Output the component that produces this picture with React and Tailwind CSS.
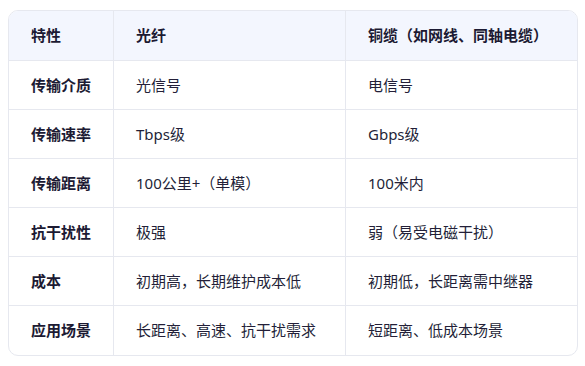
import React from 'react';

const header = ['特性', '光纤', '铜缆（如网线、同轴电缆）'];

const rows = [
  ['传输介质', '光信号', '电信号'],
  ['传输速率', 'Tbps级', 'Gbps级'],
  ['传输距离', '100公里+（单模）', '100米内'],
  ['抗干扰性', '极强', '弱（易受电磁干扰）'],
  ['成本', '初期高，长期维护成本低', '初期低，长距离需中继器'],
  ['应用场景', '长距离、高速、抗干扰需求', '短距离、低成本场景'],
];

const App = () => {
  return (
    <div
      className="w-[585px] h-[366px] bg-white pt-[10px] pl-[8px]"
      style={{ fontFamily: '"Noto Sans", "Noto Sans CJK SC", sans-serif' }}
    >
      <div className="w-[570px] rounded-[10px] border border-[#e6e8ef] overflow-hidden text-[15px]">
        <div className="grid grid-cols-[105px_232px_1fr] h-[50px] bg-[#f3f6fe] border-b border-[#e6e8ef] font-bold text-[#1c1a33]">
          {header.map((h, i) => (
            <div
              key={i}
              className={`flex items-center pl-[22px] ${i < 2 ? 'border-r border-[#e6e8ef]' : ''}`}
            >
              {h}
            </div>
          ))}
        </div>
        {rows.map((r, ri) => (
          <div
            key={ri}
            className={`grid grid-cols-[105px_232px_1fr] h-[49px] ${ri < rows.length - 1 ? 'border-b border-[#e6e8ef]' : ''}`}
          >
            <div className="flex items-center pl-[22px] font-bold text-[#1c1a33] border-r border-[#e6e8ef]">
              {r[0]}
            </div>
            <div className="flex items-center pl-[22px] text-[#231f38] border-r border-[#e6e8ef]">
              {r[1]}
            </div>
            <div className="flex items-center pl-[22px] text-[#231f38]">{r[2]}</div>
          </div>
        ))}
      </div>
    </div>
  );
};

export default App;
